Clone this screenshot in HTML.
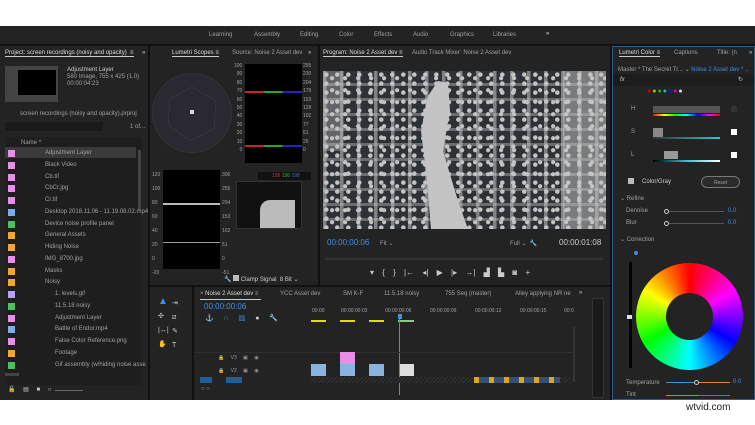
<!DOCTYPE html>
<html><head><meta charset="utf-8"><style>
*{margin:0;padding:0;box-sizing:border-box}
body{width:755px;height:425px;background:#fff;position:relative;overflow:hidden;font-family:"Liberation Sans",sans-serif;font-size:6px;color:#a0a0a0}
.a{position:absolute}
.p{position:absolute;background:#232323}
.t{position:absolute;white-space:nowrap}
.sw{position:absolute;left:8px;width:7px;height:7px}
</style></head><body>
<div class="a" style="left:0;top:26px;width:755px;height:374px;background:#111"></div>
<div class="a" style="left:0;top:26px;width:755px;height:18px;background:#232323"></div>
<div class="t" style="top:32px;left:209px">Learning</div>
<div class="t" style="top:32px;left:254px">Assembly</div>
<div class="t" style="top:32px;left:300px">Editing</div>
<div class="t" style="top:32px;left:339px">Color</div>
<div class="t" style="top:32px;left:374px">Effects</div>
<div class="t" style="top:32px;left:413px">Audio</div>
<div class="t" style="top:32px;left:450px">Graphics</div>
<div class="t" style="top:32px;left:493px">Libraries</div>
<div class="t" style="top:31px;left:546px;color:#ddd">»</div>

<div class="p" style="left:0;top:46px;width:148px;height:354px"></div>
<div class="t" style="top:50px;left:5px;color:#ddd;border-bottom:1px solid #ccc">Project: screen recordings (noisy and opacity) &nbsp;≡</div>
<div class="t" style="top:50px;left:142px;color:#ccc">»</div>
<div class="a" style="left:5px;top:66px;width:53px;height:36px;background:#444"></div>
<div class="a" style="left:18px;top:70px;width:38px;height:25px;background:#000"></div>
<div class="t" style="top:67px;left:67px;color:#ccc">Adjustment Layer</div>
<div class="t" style="top:74px;left:67px">580 Image, 755 x 425 (1.0)</div>
<div class="t" style="top:81px;left:67px">00:00:04:23</div>
<div class="t" style="top:111px;left:20px">screen recordings (noisy and opacity).prproj</div>
<div class="a" style="left:5px;top:122px;width:98px;height:9px;background:#1a1a1a"></div>
<div class="t" style="top:124px;left:130px">1 of...</div>
<div class="a" style="left:5px;top:137px;width:137px;height:248px;background:#1e1e1e"></div>
<div class="t" style="top:140px;left:21px">Name ^</div>
<div class="a" style="left:5px;top:147px;width:131px;height:11px;background:#3a3a3a"></div>
<div class="a" style="left:138px;top:150px;width:3px;height:60px;background:#444"></div>
<div style="position:absolute;left:0;top:148px;width:140px">
<div class="sw" style="top:2px;background:#e88ee8"></div><div class="t" style="top:2px;left:45px">Adjustment Layer</div>
<div class="sw" style="top:14px;background:#e88ee8"></div><div class="t" style="top:14px;left:45px">Black Video</div>
<div class="sw" style="top:26px;background:#e88ee8"></div><div class="t" style="top:26px;left:45px">Cb.tif</div>
<div class="sw" style="top:37px;background:#e88ee8"></div><div class="t" style="top:37px;left:45px">CbCr.jpg</div>
<div class="sw" style="top:49px;background:#e88ee8"></div><div class="t" style="top:49px;left:45px">Cr.tif</div>
<div class="sw" style="top:61px;background:#7ab0e8"></div><div class="t" style="top:61px;left:45px">Desktop 2018.11.06 - 11.19.08.02.mp4</div>
<div class="sw" style="top:73px;background:#4cc05a"></div><div class="t" style="top:73px;left:45px">Device noise profile panel</div>
<div class="sw" style="top:84px;background:#f0a830"></div><div class="t" style="top:84px;left:45px">General Assets</div>
<div class="sw" style="top:96px;background:#f0a830"></div><div class="t" style="top:96px;left:45px">Hiding Noise</div>
<div class="sw" style="top:108px;background:#e88ee8"></div><div class="t" style="top:108px;left:45px">IMG_8700.jpg</div>
<div class="sw" style="top:120px;background:#f0a830"></div><div class="t" style="top:120px;left:45px">Masks</div>
<div class="sw" style="top:131px;background:#f0a830"></div><div class="t" style="top:131px;left:45px">Noisy</div>
<div class="sw" style="top:143px;background:#b8a0f0"></div><div class="t" style="top:143px;left:55px">1. levels.gif</div>
<div class="sw" style="top:155px;background:#4cc05a"></div><div class="t" style="top:155px;left:55px">11.5.18 noisy</div>
<div class="sw" style="top:167px;background:#e88ee8"></div><div class="t" style="top:167px;left:55px">Adjustment Layer</div>
<div class="sw" style="top:178px;background:#7ab0e8"></div><div class="t" style="top:178px;left:55px">Battle of Endor.mp4</div>
<div class="sw" style="top:190px;background:#e88ee8"></div><div class="t" style="top:190px;left:55px">False Color Reference.png</div>
<div class="sw" style="top:202px;background:#f0a830"></div><div class="t" style="top:202px;left:55px">Footage</div>
<div class="sw" style="top:214px;background:#4cc05a"></div><div class="t" style="top:214px;left:55px">Gif assembly (w/hiding noise asse</div>
</div>
<div class="a" style="left:5px;top:373px;width:14px;height:3px;background:#444"></div>
<div class="t" style="top:386px;left:8px;color:#ccc;font-size:6px;word-spacing:6px"><span style="color:#4c4">🔓</span> ▤ ■ ○</div>
<div class="a" style="left:55px;top:390px;width:28px;height:1px;background:#666"></div>

<div class="p" style="left:150px;top:46px;width:168px;height:239px"></div>
<div class="t" style="top:50px;left:172px;color:#ddd;border-bottom:1px solid #ccc">Lumetri Scopes ≡</div>
<div class="t" style="top:50px;left:232px">Source: Noise 2 Asset dev</div>
<div class="t" style="top:50px;left:308px;color:#ccc">»</div>
<div class="a" style="left:152px;top:73px;width:80px;height:80px;border-radius:50%;background:#2a2830;border:1px solid #333"></div>
<svg class="a" style="left:152px;top:73px" width="80" height="80"><polygon points="40,14 64,28 62,56 38,68 16,52 18,26" fill="none" stroke="#3a3a44" stroke-width="0.7"/></svg>
<div class="a" style="left:190px;top:110px;width:4px;height:4px;background:#ddd"></div>
<div class="a" style="left:245px;top:64px;width:57px;height:99px;background:#000"></div>
<div class="a" style="left:245px;top:91px;width:57px;height:2px;background:linear-gradient(90deg,#c22 33%,#2a2 33%,#2a2 66%,#22c 66%)"></div>
<div class="a" style="left:245px;top:145px;width:57px;height:2px;background:linear-gradient(90deg,#c22 33%,#2a2 33%,#2a2 66%,#22c 66%)"></div>
<div class="t" style="top:62px;left:303px;font-size:5px;line-height:8.4px">255<br>230<br>204<br>179<br>153<br>128<br>102<br>77<br>51<br>26<br>0</div>
<div class="t" style="top:62px;left:234px;font-size:5px;line-height:8.4px;text-align:right">100<br>90<br>80<br>70<br>60<br>50<br>40<br>30<br>20<br>10<br>0</div>
<div class="a" style="left:163px;top:170px;width:57px;height:99px;background:#000"></div>
<div class="a" style="left:163px;top:203px;width:57px;height:2px;background:#bbb"></div>
<div class="a" style="left:163px;top:242px;width:57px;height:1px;background:#999"></div>
<div class="t" style="top:168px;left:152px;font-size:5px;line-height:14px">120<br>100<br>80<br>60<br>40<br>20<br>0<br>-20</div>
<div class="t" style="top:168px;left:222px;font-size:5px;line-height:14px">306<br>255<br>204<br>153<br>102<br>51<br>0<br>-51</div>
<div class="a" style="left:236px;top:181px;width:66px;height:48px;background:#111;border:1px solid #333"></div>
<div class="a" style="left:258px;top:172px;width:53px;height:8px;background:#111"></div>
<div class="t" style="top:173px;left:272px;font-size:5px"><span style="color:#c33">198</span> <span style="color:#3a3">196</span> <span style="color:#46c">198</span></div>
<div class="a" style="left:260px;top:200px;width:35px;height:28px;background:#bbb;border-radius:10px 0 0 0"></div>
<div class="t" style="top:275px;left:224px;color:#ccc">🔧 <span style="display:inline-block;width:6px;height:6px;background:#bbb"></span> Clamp Signal &nbsp;8 Bit ⌄</div>

<div class="p" style="left:320px;top:46px;width:290px;height:239px"></div>
<div class="t" style="top:50px;left:323px;color:#ddd;border-bottom:1px solid #ccc">Program: Noise 2 Asset dev ≡</div>
<div class="t" style="top:50px;left:412px">Audio Track Mixer: Noise 2 Asset dev</div>
<div class="a" style="left:323px;top:71px;width:283px;height:158px;background:#2e3237;background-image:radial-gradient(circle at 30% 40%,#c4c4c4 2px,transparent 2.5px),radial-gradient(circle at 70% 60%,#c4c4c4 1.8px,transparent 2.4px),linear-gradient(90deg,rgba(196,196,196,.55) 22%,transparent 22%),linear-gradient(0deg,rgba(196,196,196,.4) 20%,transparent 20%);background-size:11px 9px,13px 12px,17px 7px,19px 15px"></div>
<div class="a" style="left:563px;top:71px;width:43px;height:158px;background:rgba(196,196,196,.5)"></div>
<div class="a" style="left:323px;top:71px;width:20px;height:80px;background:rgba(196,196,196,.35)"></div>
<svg class="a" style="left:323px;top:71px" width="283" height="158"><path d="M108 158 L103 100 L98 60 L105 25 L115 10 L125 12 L127 40 L120 80 L135 130 L145 158Z" fill="#c4c4c4"/></svg>
<div class="t" style="top:238px;left:327px;color:#3d8fe8;font-size:8px">00:00:00:06</div>
<div class="t" style="top:240px;left:380px">Fit ⌄</div>
<div class="t" style="top:240px;left:510px">Full ⌄ &nbsp;🔧</div>
<div class="t" style="top:238px;left:559px;color:#ccc;font-size:8px">00:00:01:08</div>
<div class="a" style="left:325px;top:258px;width:278px;height:2px;background:#333"></div>
<div class="t" style="top:268px;left:370px;color:#ccc;font-size:8px;word-spacing:6px">▾ { } |← ◂| ▶ |▸ →| ▟ ▙ ◙ +</div>

<div class="p" style="left:150px;top:287px;width:42px;height:113px"></div>
<div class="t" style="top:296px;left:158px;color:#3d8fe8;font-size:10px">▲</div>
<div class="t" style="top:297px;left:172px;color:#ccc;font-size:7px;line-height:14px">⇥<br>⧄<br>✎<br>T</div>
<div class="t" style="top:310px;left:158px;color:#ccc;font-size:7px;line-height:14px">✣<br>|↔|<br>✋</div>

<div class="p" style="left:194px;top:287px;width:416px;height:113px"></div>
<div class="t" style="top:291px;left:200px">× <span style="color:#ddd">Noise 2 Asset dev</span> ≡</div>
<div class="a" style="left:200px;top:299px;width:61px;height:1px;background:#ccc"></div>
<div class="t" style="top:291px;left:280px">YCC Asset dev</div>
<div class="t" style="top:291px;left:343px">SM K-F</div>
<div class="t" style="top:291px;left:384px">11.5.18 noisy</div>
<div class="t" style="top:291px;left:445px">755 Seq (master)</div>
<div class="t" style="top:291px;left:515px">Alley applying NR ne</div>
<div class="t" style="top:290px;left:579px;color:#ccc">»</div>
<div class="t" style="top:302px;left:204px;color:#3d8fe8;font-size:8px">00:00:00:06</div>
<div class="t" style="top:314px;left:205px;color:#3d8fe8;font-size:7px;word-spacing:8px">⚓ ∩ ▨ <span style="color:#ccc">● 🔧</span></div>
<div class="t" style="top:308px;left:312px;font-size:5px">00:00</div>
<div class="t" style="top:308px;left:341px;font-size:5px">00:00:00:03</div>
<div class="t" style="top:308px;left:385px;font-size:5px">00:00:00:06</div>
<div class="t" style="top:308px;left:430px;font-size:5px">00:00:00:09</div>
<div class="t" style="top:308px;left:475px;font-size:5px">00:00:00:12</div>
<div class="t" style="top:308px;left:520px;font-size:5px">00:00:00:15</div>
<div class="t" style="top:308px;left:564px;font-size:5px">00:0</div>
<div class="a" style="left:311px;top:320px;width:15px;height:2px;background:#dd0"></div>
<div class="a" style="left:340px;top:320px;width:15px;height:2px;background:#dd0"></div>
<div class="a" style="left:369px;top:320px;width:15px;height:2px;background:#dd0"></div>
<div class="a" style="left:398px;top:320px;width:16px;height:2px;background:#8c8"></div>
<div class="a" style="left:398px;top:314px;width:4px;height:5px;background:#3d8fe8"></div>
<div class="a" style="left:399px;top:318px;width:1px;height:77px;background:#3d8fe8"></div>
<div class="a" style="left:194px;top:352px;width:380px;height:1px;background:#2e2e2e"></div>
<div class="t" style="top:355px;left:218px;font-size:5px;color:#999;word-spacing:5px">🔒 V3 ▣ ◉</div>
<div class="t" style="top:368px;left:218px;font-size:5px;color:#999;word-spacing:5px">🔒 V2 ▣ ◉</div>
<div class="a" style="left:200px;top:377px;width:12px;height:6px;background:#1f5f95"></div>
<div class="a" style="left:226px;top:377px;width:16px;height:6px;background:#1f5f95"></div>
<div class="t" style="top:386px;left:201px;color:#aaa;font-size:6px">○ ○</div>
<div class="a" style="left:340px;top:352px;width:15px;height:12px;background:#e88ee8"></div>
<div class="a" style="left:311px;top:364px;width:15px;height:12px;background:#8ab4e0"></div>
<div class="a" style="left:340px;top:364px;width:15px;height:12px;background:#8ab4e0"></div>
<div class="a" style="left:369px;top:364px;width:15px;height:12px;background:#8ab4e0"></div>
<div class="a" style="left:400px;top:364px;width:14px;height:12px;background:#ddd"></div>
<div class="a" style="left:311px;top:377px;width:262px;height:6px;background:repeating-linear-gradient(135deg,#333 0 1px,#222 1px 3px)"></div>
<div class="a" style="left:474px;top:377px;width:86px;height:6px;background:repeating-linear-gradient(90deg,#d9a820 0 5px,#34507a 5px 15px)"></div>
<div class="a" style="left:573px;top:327px;width:2px;height:55px;background:#333"></div>
<div class="a" style="left:592px;top:298px;width:12px;height:100px;background:#1a1a1a;border:1px solid #333"></div>

<div class="p" style="left:612px;top:46px;width:143px;height:354px;border:1px solid #2a5d8c"></div>
<div class="t" style="top:50px;left:619px;color:#ddd;border-bottom:1px solid #ccc">Lumetri Color ≡</div>
<div class="t" style="top:50px;left:674px">Captions</div>
<div class="t" style="top:50px;left:717px">Title: (n</div>
<div class="t" style="top:50px;left:749px;color:#ccc">»</div>
<div class="t" style="top:66px;left:618px">Master * The Secret Tr... ⌄ <span style="color:#3d8fe8">Noise 2 Asset dev * ..</span></div>
<div class="a" style="left:613px;top:74px;width:141px;height:12px;background:#1c1c1c"></div>
<div class="t" style="top:77px;left:620px;color:#ccc;font-style:italic">fx</div>
<div class="t" style="top:76px;left:738px;color:#ccc">↻</div>
<div class="t" style="top:88px;left:647px;font-size:7px;letter-spacing:1px"><span style="color:#c00">●</span><span style="color:#bb0">●</span><span style="color:#1b1">●</span><span style="color:#1bb">●</span><span style="color:#11e">●</span><span style="color:#b1b">●</span><span style="color:#ddd">●</span></div>
<div class="t" style="top:106px;left:631px">H</div>
<div class="a" style="left:653px;top:106px;width:67px;height:7px;background:#555"></div>
<div class="a" style="left:653px;top:114px;width:67px;height:2px;background:linear-gradient(90deg,red,yellow,lime,cyan,blue,magenta,red)"></div>
<div class="a" style="left:731px;top:106px;width:6px;height:6px;background:#333"></div>
<div class="t" style="top:129px;left:631px">S</div>
<div class="a" style="left:653px;top:128px;width:10px;height:9px;background:#888"></div>
<div class="a" style="left:653px;top:137px;width:67px;height:2px;background:linear-gradient(90deg,#333,#2cc)"></div>
<div class="a" style="left:731px;top:129px;width:6px;height:6px;background:#fff"></div>
<div class="t" style="top:152px;left:631px">L</div>
<div class="a" style="left:664px;top:151px;width:14px;height:8px;background:#999"></div>
<div class="a" style="left:653px;top:160px;width:67px;height:2px;background:linear-gradient(90deg,#000,#2cc,#fff)"></div>
<div class="a" style="left:731px;top:152px;width:6px;height:6px;background:#fff"></div>
<div class="a" style="left:628px;top:178px;width:6px;height:6px;background:#bbb"></div>
<div class="t" style="top:179px;left:642px;color:#ccc">Color/Gray</div>
<div class="a" style="left:701px;top:176px;width:39px;height:12px;border:1px solid #777;border-radius:6px;background:#2a2a2a"></div>
<div class="t" style="top:180px;left:714px;font-size:5px">Reset</div>
<div class="t" style="top:195px;left:620px">⌄ Refine</div>
<div class="t" style="top:208px;left:626px">Denoise</div>
<div class="t" style="top:220px;left:626px">Blur</div>
<div class="a" style="left:664px;top:209px;width:5px;height:5px;border:1px solid #ccc;border-radius:50%"></div>
<div class="a" style="left:664px;top:221px;width:5px;height:5px;border:1px solid #ccc;border-radius:50%"></div>
<div class="a" style="left:669px;top:211px;width:55px;height:1px;background:#555"></div>
<div class="a" style="left:669px;top:223px;width:55px;height:1px;background:#555"></div>
<div class="t" style="top:208px;left:728px;color:#3d8fe8">0.0</div>
<div class="t" style="top:220px;left:728px;color:#3d8fe8">0.0</div>
<div class="t" style="top:236px;left:620px">⌄ Correction</div>
<div class="a" style="left:634px;top:251px;width:4px;height:4px;border-radius:50%;background:#3d8fe8"></div>
<div class="a" style="left:629px;top:262px;width:3px;height:106px;background:#000"></div>
<div class="a" style="left:627px;top:315px;width:5px;height:4px;background:#ddd"></div>
<div class="a" style="left:636px;top:263px;width:107px;height:107px;border-radius:50%;background:conic-gradient(red,#f0f,blue,cyan,lime,yellow,red)"></div>
<div class="a" style="left:666px;top:293px;width:47px;height:47px;border-radius:50%;background:#232323"></div>
<div class="t" style="top:380px;left:626px">Temperature</div>
<div class="a" style="left:666px;top:382px;width:64px;height:1px;background:linear-gradient(90deg,#39c 50%,#d83 50%)"></div>
<div class="a" style="left:694px;top:380px;width:5px;height:5px;border:1px solid #ccc;border-radius:50%;background:#232323"></div>
<div class="t" style="top:379px;left:733px;color:#3d8fe8">0.0</div>
<div class="t" style="top:392px;left:626px">Tint</div>
<div class="a" style="left:666px;top:395px;width:64px;height:1px;background:linear-gradient(90deg,#3c3 50%,#c3c 50%)"></div>

<div class="t" style="top:402px;left:686px;color:#222;font-size:10px">wtvid.com</div>
</body></html>
